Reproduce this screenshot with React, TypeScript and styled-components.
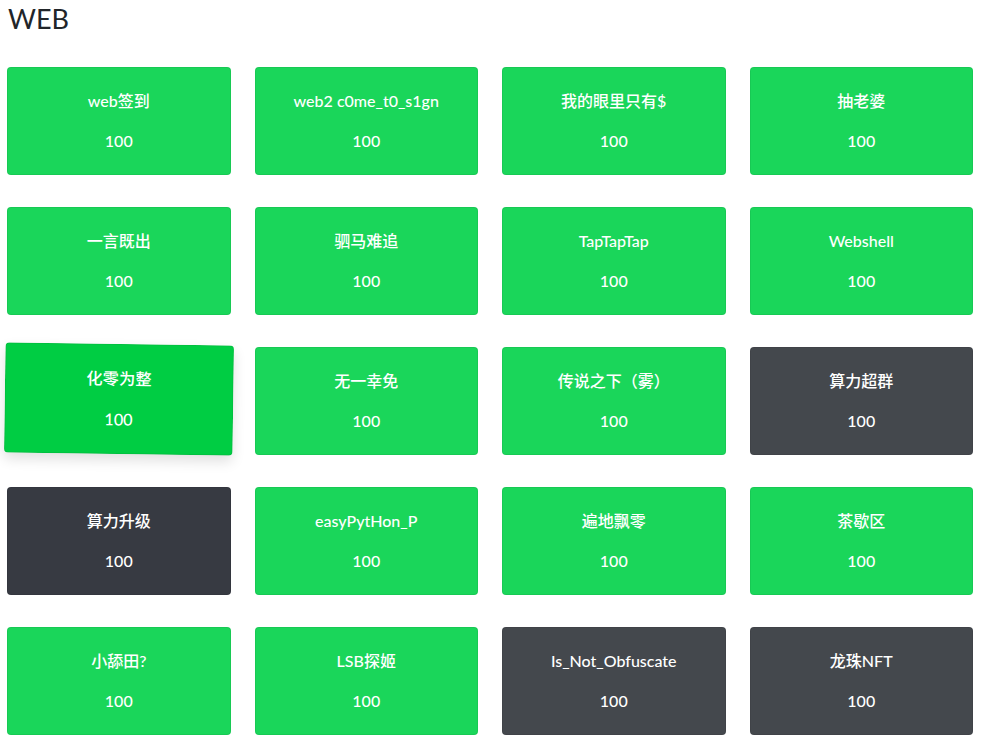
import React from 'react'
import styled, { createGlobalStyle } from 'styled-components'

const GlobalStyle = createGlobalStyle`
  body {
    margin: 0;
    background: #ffffff;
    font-family: Lato, "Noto Sans CJK SC", sans-serif;
  }
`

const Page = styled.div`
  padding: 2px 11px 0 7px;
`

const Title = styled.h1`
  margin: 0 0 31px 1px;
  font-size: 27px;
  font-weight: 400;
  line-height: 34px;
  color: #212529;
`

const Grid = styled.div`
  display: grid;
  grid-template-columns: repeat(4, 1fr);
  column-gap: 24px;
  row-gap: 32px;
`

type Tone = 'solved' | 'dark' | 'grey'

const tones: Record<Tone, string> = {
  solved: '#1ad65a',
  dark: '#373a42',
  grey: '#44484d',
}

const Card = styled.button<{ $tone: Tone; $hover?: boolean }>`
  height: 108px;
  border: 1px solid rgba(0, 0, 0, 0.06);
  border-radius: 4px;
  padding: 0;
  background: ${(p) => (p.$hover ? '#00cd43' : tones[p.$tone])};
  color: #ffffff;
  font-family: Lato, "Noto Sans CJK SC", sans-serif;
  display: flex;
  flex-direction: column;
  align-items: center;
  justify-content: flex-start;
  cursor: pointer;
  ${(p) =>
    p.$hover &&
    `
    transform: translateY(-2px) rotate(0.8deg) scale(1.02);
    box-shadow: 0 6px 12px rgba(0, 0, 0, 0.12);
  `}
`

const Name = styled.div`
  margin-top: 23px;
  font-size: 16px;
  font-weight: 500;
  line-height: 20px;
`

const Value = styled.div`
  margin-top: 20px;
  font-size: 16px;
  font-weight: 500;
  line-height: 20px;
`

const challenges: { name: string; tone: Tone; hover?: boolean }[] = [
  { name: 'web签到', tone: 'solved' },
  { name: 'web2 c0me_t0_s1gn', tone: 'solved' },
  { name: '我的眼里只有$', tone: 'solved' },
  { name: '抽老婆', tone: 'solved' },
  { name: '一言既出', tone: 'solved' },
  { name: '驷马难追', tone: 'solved' },
  { name: 'TapTapTap', tone: 'solved' },
  { name: 'Webshell', tone: 'solved' },
  { name: '化零为整', tone: 'solved', hover: true },
  { name: '无一幸免', tone: 'solved' },
  { name: '传说之下（雾）', tone: 'solved' },
  { name: '算力超群', tone: 'grey' },
  { name: '算力升级', tone: 'dark' },
  { name: 'easyPytHon_P', tone: 'solved' },
  { name: '遍地飘零', tone: 'solved' },
  { name: '茶歇区', tone: 'solved' },
  { name: '小舔田?', tone: 'solved' },
  { name: 'LSB探姬', tone: 'solved' },
  { name: 'Is_Not_Obfuscate', tone: 'grey' },
  { name: '龙珠NFT', tone: 'grey' },
]

const App = () => {
  return (
    <Page>
      <GlobalStyle />
      <Title>WEB</Title>
      <Grid>
        {challenges.map((c) => (
          <Card key={c.name} $tone={c.tone} $hover={c.hover}>
            <Name>{c.name}</Name>
            <Value>100</Value>
          </Card>
        ))}
      </Grid>
    </Page>
  )
}

export default App
